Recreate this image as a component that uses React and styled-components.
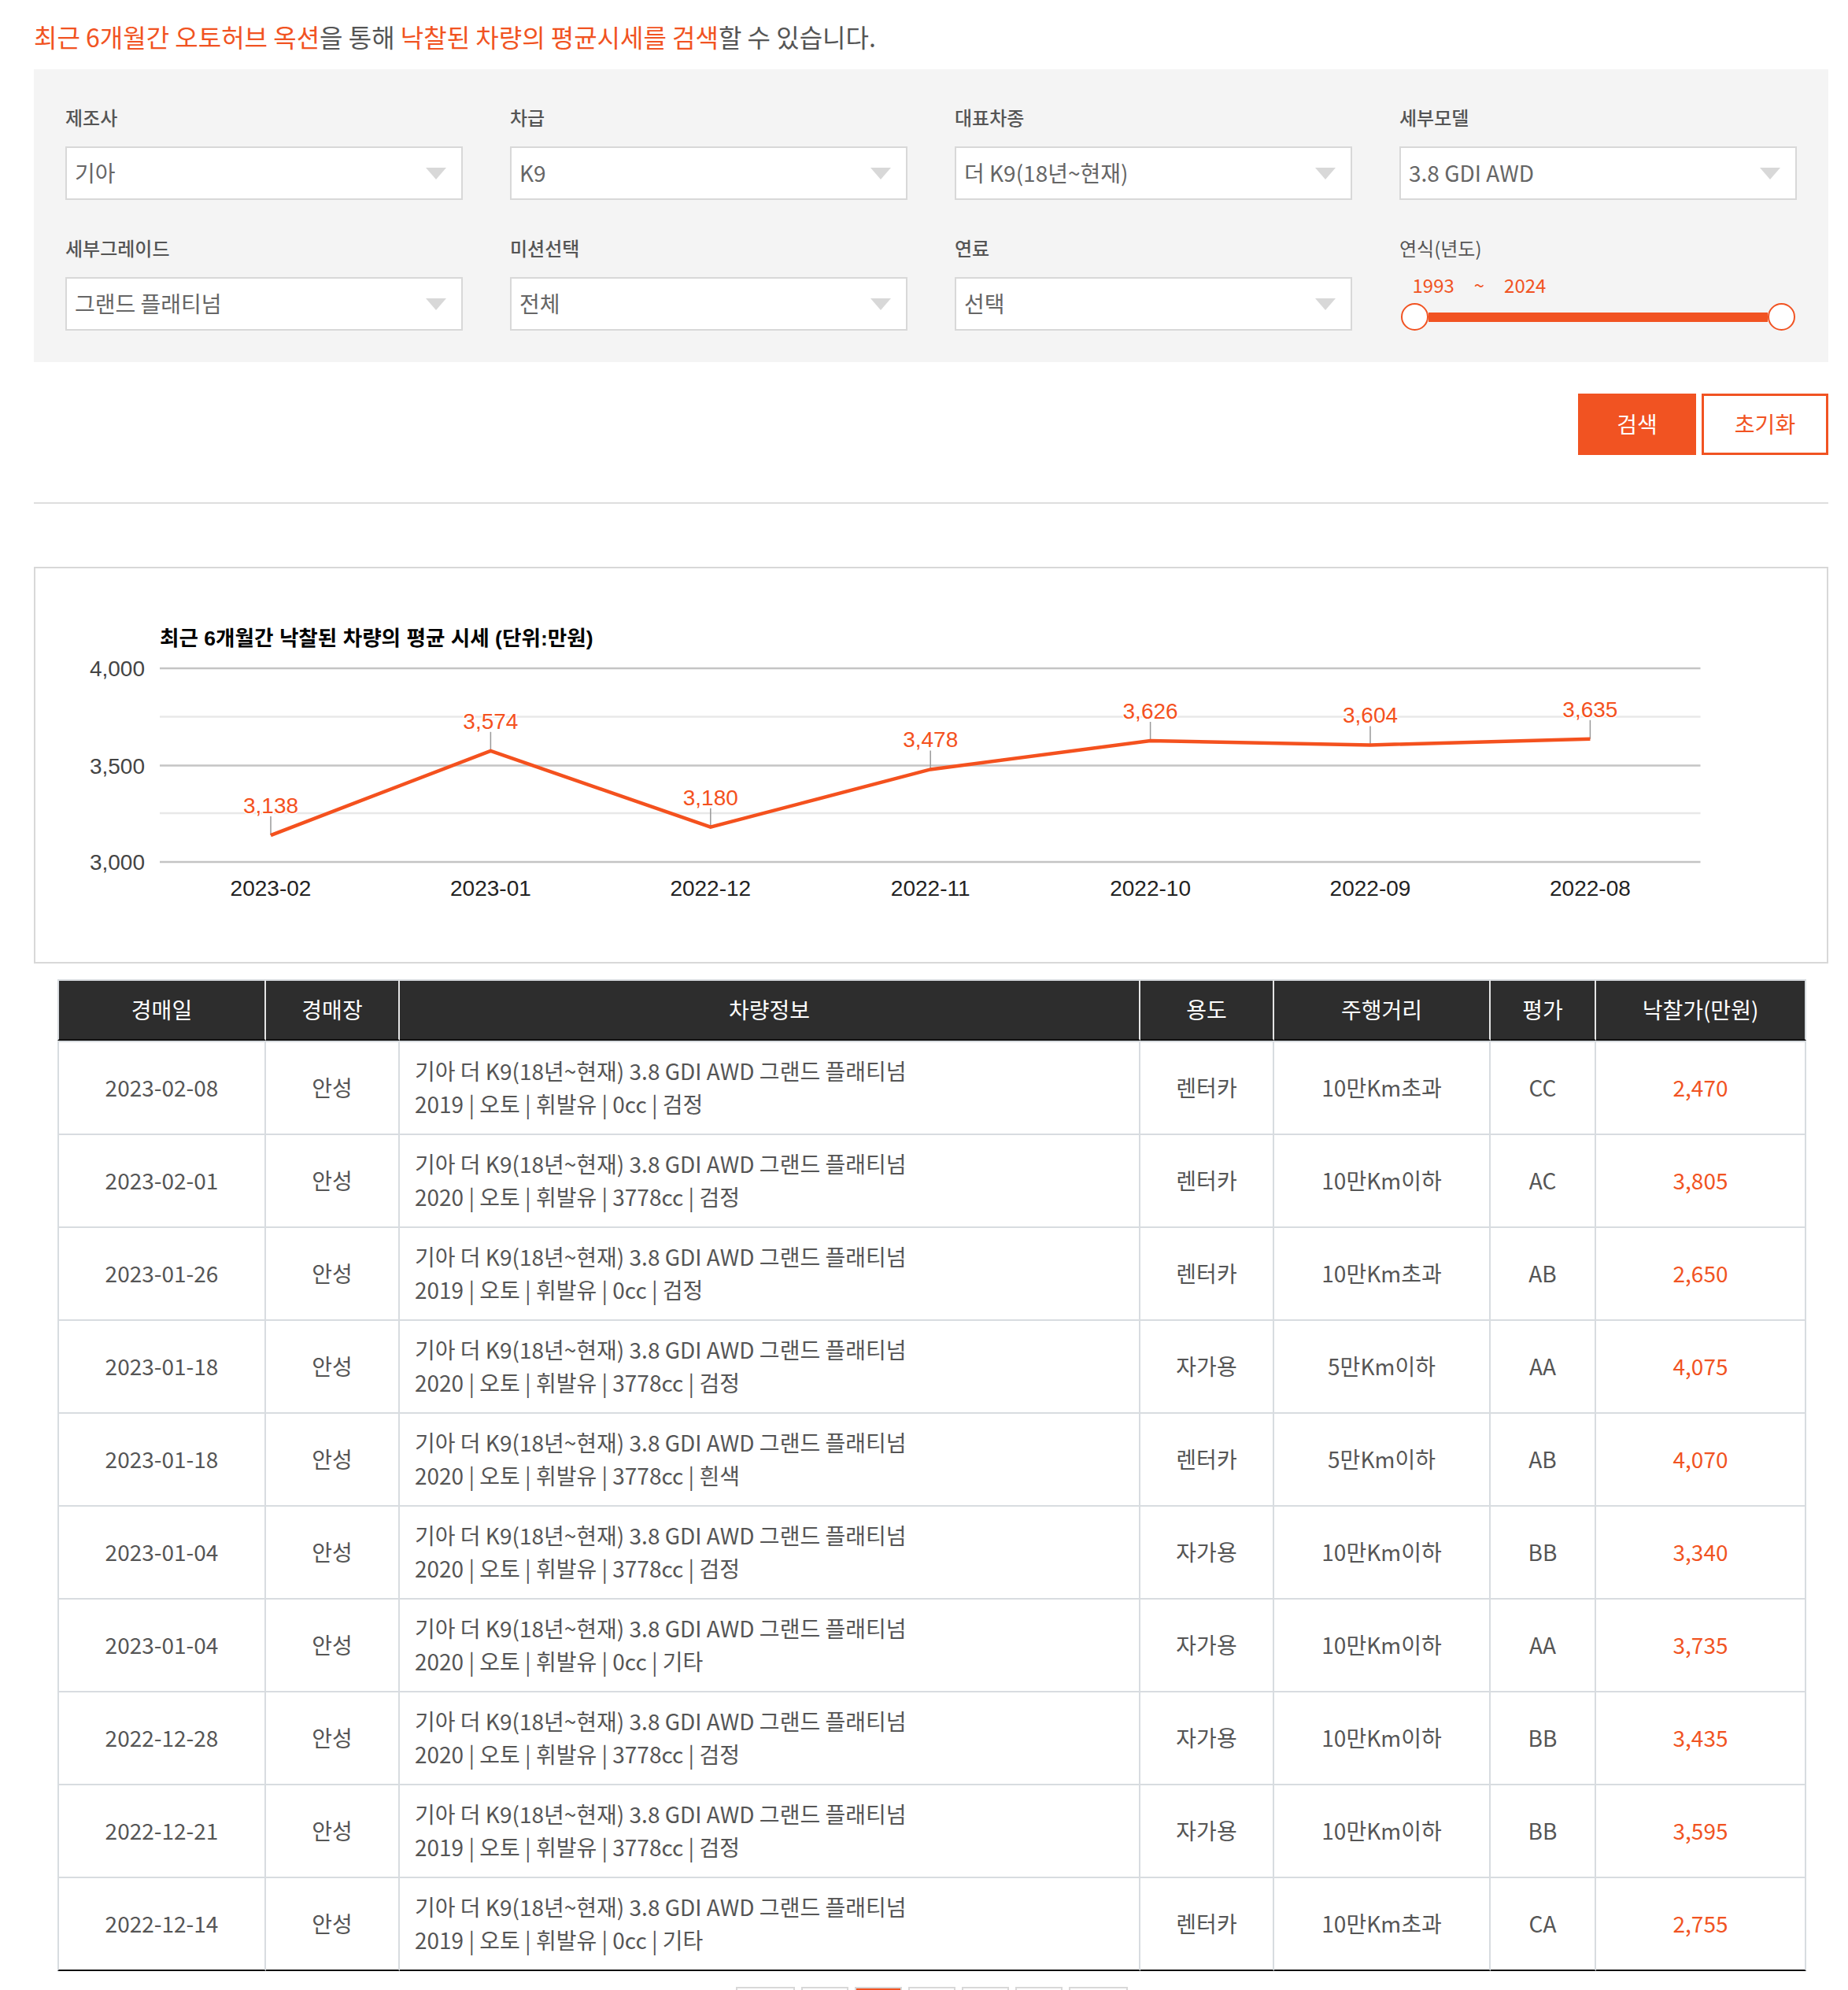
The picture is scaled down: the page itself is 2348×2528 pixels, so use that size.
import React from "react";
import styled, { createGlobalStyle } from "styled-components";

const ORANGE = "#f15322";
const KR = `"Noto Sans CJK KR", "Noto Sans", sans-serif`;

const Global = createGlobalStyle`
  html, body { margin: 0; padding: 0; background: #fff; }
  * { box-sizing: border-box; }
`;

const Page = styled.div`
  height: 2528px;
  overflow: hidden;
  padding-left: 43px;
  width: 2348px;
  font-family: ${KR};
  color: #555;
`;
const Content = styled.div`
  width: 2280px;
`;
const Intro = styled.p`
  margin: 0;
  height: 88px;
  padding-top: 3px;
  display: flex;
  align-items: center;
  font-size: 32px;
  white-space: pre;
  color: #555;
`;
const Accent = styled.span`
  color: ${ORANGE};
`;
const Panel = styled.section`
  background: #f4f4f4;
  padding: 44px 40px 40px;
  display: grid;
  grid-template-columns: repeat(4, 505px);
  column-gap: 60px;
  row-gap: 44px;
`;
const Field = styled.div`
  display: flex;
  flex-direction: column;
`;
const Label = styled.label`
  font-size: 24px;
  font-weight: ${(p) => (p.$light ? 400 : 500)};
  line-height: 33px;
  height: 36px;
  margin-bottom: ${(p) => (p.$light ? 15 : 18)}px;
  color: #555;
`;
const SelectBox = styled.div`
  height: 68px;
  background: #fff;
  border: 2px solid #d8d8d8;
  padding: 0 19px 3px 10px;
  display: flex;
  align-items: center;
  justify-content: space-between;
  font-size: 28px;
  color: #666;
`;
const Arrow = styled.i`
  width: 0;
  height: 0;
  margin-top: 3px;
  border-left: 13px solid transparent;
  border-right: 13px solid transparent;
  border-top: 15px solid #d8d8d8;
`;
const YearRange = styled.div`
  display: flex;
  gap: 25px;
  padding-left: 16.5px;
  height: 28px;
  line-height: 25px;
  font-size: 24px;
  color: ${ORANGE};
`;
const Slider = styled.div`
  display: flex;
  align-items: center;
  padding-left: 2px;
  margin-top: 8px;
`;
const Handle = styled.span`
  width: 35px;
  height: 35px;
  flex: none;
  border-radius: 50%;
  background: #fff;
  border: 2px solid ${ORANGE};
`;
const Track = styled.span`
  width: 431px;
  height: 12px;
  background: ${ORANGE};
`;
const Actions = styled.div`
  display: flex;
  justify-content: flex-end;
  gap: 7px;
  margin-top: 40px;
`;
const Button = styled.button`
  height: 78px;
  width: ${(p) => (p.$primary ? 150 : 161)}px;
  border: 3px solid ${ORANGE};
  background: ${(p) => (p.$primary ? ORANGE : "#fff")};
  color: ${(p) => (p.$primary ? "#fff" : ORANGE)};
  font-family: ${KR};
  font-size: 28px;
  padding: 0 0 3px;
`;
const Divider = styled.hr`
  margin: 60px 0 80px;
  border: 0;
  height: 2px;
  background: #dedede;
`;
const ChartBox = styled.div`
  height: 504px;
  border: 2px solid #d8d8d8;
  background: #fff;
`;
const ChartSvg = styled.svg`
  display: block;
  width: 2276px;
  height: 500px;
  font-family: "Liberation Sans", ${KR};
`;
const Table = styled.table`
  margin: 20px 0 0 30px;
  width: 2222px;
  table-layout: fixed;
  border-collapse: separate;
  border-spacing: 0;
  font-size: 28px;
`;
const Th = styled.th`
  height: 78px;
  padding: 0 0 2px;
  font-weight: 400;
  color: #fff;
  background: #2d2d2d;
  border-top: 2px solid #d8dce0;
  border-bottom: 2px solid #111;
  border-right: 2px solid #e4e4e4;
  &:first-child { border-left: 2px solid #d8dce0; }
  &:last-child { border-right: 2px solid #d8dce0; }
`;
const Td = styled.td`
  height: 118px;
  padding: ${(p) => (p.$info ? "0 0 2px 19px" : "0 0 2px")};
  text-align: ${(p) => (p.$info ? "left" : "center")};
  color: ${(p) => (p.$price ? ORANGE : "#555")};
  line-height: 42px;
  border-bottom: 2px solid #d8dce0;
  border-right: 2px solid #d8dce0;
  &:first-child { border-left: 2px solid #d8dce0; }
  tr:first-child > & { height: 120px; border-top: 2px solid #d8dce0; }
  tr:last-child > & { border-bottom-color: #111; }
`;
const InfoLine = styled.div``;
const Pager = styled.nav`
  margin: 20px 0 0 30px;
  width: 2222px;
  display: flex;
  justify-content: center;
  gap: 8px;
`;
const PageBox = styled.a`
  width: ${(p) => (p.$wide ? 75 : 60)}px;
  height: 60px;
  border: 2px solid #d8d8d8;
  background: ${(p) => (p.$active ? ORANGE : "#fff")};
`;

const filters = [
  ["제조사", "기아"],
  ["차급", "K9"],
  ["대표차종", "더 K9(18년~현재)"],
  ["세부모델", "3.8 GDI AWD"],
  ["세부그레이드", "그랜드 플래티넘"],
  ["미션선택", "전체"],
  ["연료", "선택"],
];

const MODEL = "기아 더 K9(18년~현재) 3.8 GDI AWD 그랜드 플래티넘";
const rows = [
  ["2023-02-08", "2019 | 오토 | 휘발유 | 0cc | 검정", "렌터카", "10만Km초과", "CC", "2,470"],
  ["2023-02-01", "2020 | 오토 | 휘발유 | 3778cc | 검정", "렌터카", "10만Km이하", "AC", "3,805"],
  ["2023-01-26", "2019 | 오토 | 휘발유 | 0cc | 검정", "렌터카", "10만Km초과", "AB", "2,650"],
  ["2023-01-18", "2020 | 오토 | 휘발유 | 3778cc | 검정", "자가용", "5만Km이하", "AA", "4,075"],
  ["2023-01-18", "2020 | 오토 | 휘발유 | 3778cc | 흰색", "렌터카", "5만Km이하", "AB", "4,070"],
  ["2023-01-04", "2020 | 오토 | 휘발유 | 3778cc | 검정", "자가용", "10만Km이하", "BB", "3,340"],
  ["2023-01-04", "2020 | 오토 | 휘발유 | 0cc | 기타", "자가용", "10만Km이하", "AA", "3,735"],
  ["2022-12-28", "2020 | 오토 | 휘발유 | 3778cc | 검정", "자가용", "10만Km이하", "BB", "3,435"],
  ["2022-12-21", "2019 | 오토 | 휘발유 | 3778cc | 검정", "자가용", "10만Km이하", "BB", "3,595"],
  ["2022-12-14", "2019 | 오토 | 휘발유 | 0cc | 기타", "렌터카", "10만Km초과", "CA", "2,755"],
];

const columns = [
  ["경매일", 265],
  ["경매장", 170],
  ["차량정보", 941],
  ["용도", 170],
  ["주행거리", 275],
  ["평가", 134],
  ["낙찰가(만원)", 267],
];

const points = [
  ["2023-02", 3138],
  ["2023-01", 3574],
  ["2022-12", 3180],
  ["2022-11", 3478],
  ["2022-10", 3626],
  ["2022-09", 3604],
  ["2022-08", 3635],
];
const px = (i) => 344 + i * 279.4;
const py = (v) => 1095 - (v - 3000) * 0.246;
const fmt = (v) => v.toLocaleString("en-US");

function Chart() {
  return (
    <ChartSvg viewBox="45 722 2276 500">
      <text x="203" y="820" fontSize="26.6" fontWeight="700" fill="#000">
        최근 6개월간 낙찰된 차량의 평균 시세 (단위:만원)
      </text>
      {[910.5, 1033].map((y) => (
        <line key={y} x1="203" x2="2160.5" y1={y} y2={y} stroke="#e8e8e8" strokeWidth="2.5" />
      ))}
      {[
        [849, "4,000"],
        [972.5, "3,500"],
        [1095, "3,000"],
      ].map(([y, t]) => (
        <g key={y}>
          <line x1="203" x2="2160.5" y1={y} y2={y} stroke="#c4c4c4" strokeWidth="2.5" />
          <text x="184" y={y + 10} fontSize="28" textAnchor="end" fill="#444">
            {t}
          </text>
        </g>
      ))}
      {points.map(([m, v], i) => (
        <line key={m} x1={px(i)} x2={px(i)} y1={py(v)} y2={py(v) - 24} stroke="#999" strokeWidth="1.5" />
      ))}
      <polyline
        points={points.map(([, v], i) => `${px(i)},${py(v)}`).join(" ")}
        fill="none"
        stroke="#f4511e"
        strokeWidth="4.5"
      />
      {points.map(([m, v], i) => (
        <g key={m}>
          <text
            x={px(i)}
            y={py(v) - 28}
            fontSize="28"
            textAnchor="middle"
            fill="#f4511e"
            stroke="#fff"
            strokeWidth="3"
            paintOrder="stroke"
          >
            {fmt(v)}
          </text>
          <text x={px(i)} y="1138" fontSize="28" textAnchor="middle" fill="#222">
            {m}
          </text>
        </g>
      ))}
    </ChartSvg>
  );
}

export default function App() {
  return (
    <Page>
      <Global />
      <Content>
        <Intro>
          <Accent>최근 6개월간 오토허브 옥션</Accent>을 통해 <Accent>낙찰된 차량의 평균시세를 검색</Accent>할 수 있습니다.
        </Intro>
        <Panel>
          {filters.map(([label, value]) => (
            <Field key={label}>
              <Label>{label}</Label>
              <SelectBox>
                {value}
                <Arrow />
              </SelectBox>
            </Field>
          ))}
          <Field>
            <Label $light>연식(년도)</Label>
            <YearRange>
              <span>1993</span>
              <span>~</span>
              <span>2024</span>
            </YearRange>
            <Slider>
              <Handle />
              <Track />
              <Handle />
            </Slider>
          </Field>
        </Panel>
        <Actions>
          <Button $primary>검색</Button>
          <Button>초기화</Button>
        </Actions>
        <Divider />
        <ChartBox>
          <Chart />
        </ChartBox>
        <Table>
          <colgroup>
            {columns.map(([t, w]) => (
              <col key={t} width={w} />
            ))}
          </colgroup>
          <thead>
            <tr>
              {columns.map(([t]) => (
                <Th key={t}>{t}</Th>
              ))}
            </tr>
          </thead>
          <tbody>
            {rows.map(([date, spec, use, km, grade, price], i) => (
              <tr key={i}>
                <Td>{date}</Td>
                <Td>안성</Td>
                <Td $info>
                  <InfoLine>{MODEL}</InfoLine>
                  <InfoLine>{spec}</InfoLine>
                </Td>
                <Td>{use}</Td>
                <Td>{km}</Td>
                <Td>{grade}</Td>
                <Td $price>{price}</Td>
              </tr>
            ))}
          </tbody>
        </Table>
        <Pager>
          <PageBox $wide />
          <PageBox />
          <PageBox $active />
          <PageBox />
          <PageBox />
          <PageBox />
          <PageBox $wide />
        </Pager>
      </Content>
    </Page>
  );
}
